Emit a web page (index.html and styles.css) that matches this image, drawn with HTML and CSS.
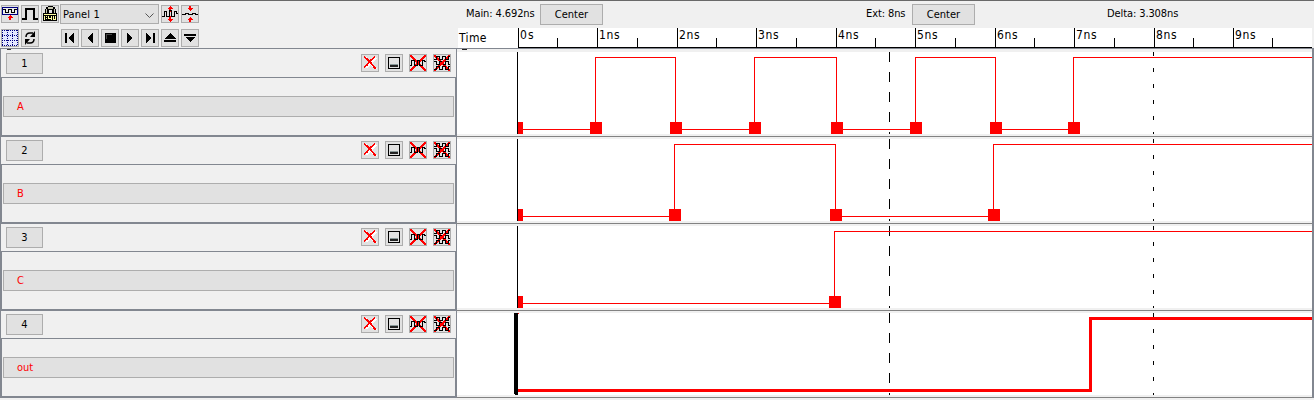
FILE: index.html
```
<!DOCTYPE html>
<html lang="en">
<head>
<meta charset="utf-8">
<title>Timing diagram</title>
<link rel="stylesheet" href="styles.css">
</head>
<body>
<svg class="defs" aria-hidden="true">
  <symbol id="close" viewBox="0 0 16 16"><path d="M3 2l11 12M14 3L4 13" stroke="#fff" stroke-width="2"/><path d="M2 2l3 2 4 4 3 4 2 2M13 2l-4 3-4 5-3 2" fill="none" stroke="#f00" stroke-width="1.700"/></symbol>
  <symbol id="mini" viewBox="0 0 16 16"><path d="M2.500 2.500h11v11h-11z" fill="none" stroke="#000"/><path d="M4 9h8v1H4z" fill="#8a9a9a"/><path d="M4 10h8v2H4z" fill="#222"/></symbol>
  <symbol id="wavex" viewBox="0 0 16 16"><path d="M0 0l16 16M16 0L0 16" stroke="#f00" stroke-width="2"/><path d="M6 6h4v4H6z" fill="#f00"/><path d="M0 10.500h1.500v-5h3v5h3v-5h2v5h3v-5h2v1H16" fill="none" stroke="#000"/></symbol>
  <symbol id="wavesx" viewBox="0 0 16 16"><path d="M0 0l16 16M16 0L0 16" stroke="#f00" stroke-width="2"/><path d="M6 6h4v4H6z" fill="#f00"/><path d="M0 4.500h2.500v-3h3v3h3v-3h3v3h3v-3H16M0 6.500h2.500v3h3v-3h2M9 9.500h2.500v-3h3v3H16M0 14.500h2.500v-3h3v3h3v-3h3v3h3v-3H16" fill="none" stroke="#000"/></symbol>
</svg>
<main class="app">
  <header class="top">
    <div class="tools">
      <div class="line">
        <button class="ico"><svg viewBox="0 0 16 16"><path d="M0 1h16v8H0z" fill="#000080"/><path d="M1 2h14v6H1z" fill="#ececec"/><path d="M1 3.500h2.500v3h3v-3h3v3h3v-3H15" fill="none" stroke="#000"/><path d="M8 9l3 3H9v2H7v-2H5z" fill="#f00"/></svg></button>
        <button class="ico"><svg viewBox="0 0 16 16"><path d="M0 13h4V3h8v10h4" fill="none" stroke="#000" stroke-width="2"/></svg></button>
        <button class="ico lock"><svg viewBox="0 0 16 16"><path d="M3 7V3h1V1h2V0h5v1h2v2h1v4h-4V4H7v3z" fill="#000"/><path d="M4 7V3h2V1h5v2h2v4h-1V3H5v4z" fill="#c8c8b0"/><path d="M1 7h14v8H1z" fill="#000"/><path d="M2 8h12v1H2zM2 10h1v4H2zM4 10h1v1H4zM4 12h1v1H4zM6 10h1v2h2v-2h1v4H9v-1H6zM11 10h1v3h1v-3h1v4h-3z" fill="#ffffa0"/></svg></button>
        <div class="select">Panel 1<svg viewBox="0 0 9 5"><path d="M.5.5l4 4 4-4" fill="none" stroke="#555"/></svg></div>
        <button class="ico"><svg viewBox="0 0 16 16"><path d="M8 0l3 3H9v3H7V3H5zM8 16l3-3H9v-3H7v3H5z" fill="#f00"/><path d="M0 10.500h2.500v-5h2v5h3v-6h2v6h3v-5h2v2H16" fill="none" stroke="#000"/></svg></button>
        <button class="ico"><svg viewBox="0 0 16 16"><path d="M8 5l3-3H9V0H7v2H5zM8 11l3 3H9v2H7v-2H5z" fill="#f00"/><path d="M0 8.500h3v-1h3v1h4v-1h3v1h3" fill="none" stroke="#000"/></svg></button>
      </div>
      <div class="line">
        <button class="ico"><svg viewBox="0 0 16 16"><path d="M0 0h16v16H0z" fill="#e4e8ff"/><path d="M.5 0v16M5.500 0v16M10.500 0v16M15.500 0v16M0 .5h16M0 5.500h16M0 10.500h16M0 15.500h16" stroke="#000080" stroke-dasharray="1 1"/></svg></button>
        <button class="ico gap"><svg class="smooth" viewBox="0 0 16 16"><path d="M4 7c0-3 2-4 4-4h3M12 9c0 3-2 4-4 4H5" fill="none" stroke="#000" stroke-width="1.500"/><path d="M13 1v6H8zM3 15V9h5z"/></svg></button>
        <button class="ico"><svg viewBox="0 0 16 16"><path d="M3 3h2v10H3zM12 3v10L6 8z"/></svg></button>
        <button class="ico"><svg viewBox="0 0 16 16"><path d="M11 3v10L5 8z"/></svg></button>
        <button class="ico"><svg viewBox="0 0 16 16"><path d="M3 3h11v10H3z"/><path d="M4 4h6v1H5v4H4z" fill="#444"/></svg></button>
        <button class="ico"><svg viewBox="0 0 16 16"><path d="M5 3v10l6-5z"/></svg></button>
        <button class="ico"><svg viewBox="0 0 16 16"><path d="M11 3h2v10h-2zM4 3v10l6-5z"/></svg></button>
        <button class="ico"><svg viewBox="0 0 16 16"><path d="M8 3l6 6H2zM2 10h12v2H2z"/></svg></button>
        <button class="ico"><svg viewBox="0 0 16 16"><path d="M2 4h12v2H2zM3 7h11l-6 5z"/></svg></button>
      </div>
    </div>
    <div class="info">
      <div class="cursors">
        <span class="main">Main: 4.692ns</span><button class="center">Center</button>
        <span class="ext">Ext: 8ns</span><button class="center">Center</button>
        <span class="delta">Delta: 3.308ns</span>
      </div>
      <svg class="ruler" viewBox="458 28 854 20">
        <path d="M518 47.500H1312M518.500 28v20M597.500 28v20M677.500 28v20M756.500 28v20M836.500 28v20M915.500 28v20M995.500 28v20M1074.500 28v20M1154.500 28v20M1233.500 28v20M557.500 38v10M637.500 38v10M716.500 38v10M796.500 38v10M875.500 38v10M955.500 38v10M1034.500 38v10M1114.500 38v10M1193.500 38v10M1272.500 38v10" stroke="#000"/>
        <g class="labels"><text x="459" y="42" textLength="27.500">Time</text><text x="520" y="39" textLength="13.500">0s</text><text x="599" y="39" textLength="20.500">1ns</text><text x="679" y="39" textLength="20.500">2ns</text><text x="758" y="39" textLength="20.500">3ns</text><text x="838" y="39" textLength="20.500">4ns</text><text x="917" y="39" textLength="20.500">5ns</text><text x="997" y="39" textLength="20.500">6ns</text><text x="1076" y="39" textLength="20.500">7ns</text><text x="1156" y="39" textLength="20.500">8ns</text><text x="1235" y="39" textLength="20.500">9ns</text></g>
      </svg>
    </div>
  </header>
  <section class="rows">
    <div class="row">
      <div class="side"><div class="head"><button class="num">1</button><div class="acts"><button class="ico"><svg><use href="#close"/></svg></button><button class="ico"><svg><use href="#mini"/></svg></button><button class="ico"><svg><use href="#wavex"/></svg></button><button class="ico"><svg><use href="#wavesx"/></svg></button></div></div><div class="body"><button class="signal">A</button></div></div>
      <div class="plot"><svg viewBox="457 52 855 82"><path class="m" d="M889.500 52v82"/><path class="e" d="M1153.500 52v82"/><path class="w" d="M518 129.500H595.500V57.500H675.500V129.500H754.500V57.500H836.500V129.500H915.500V57.500H995.500V129.500H1073.500V57.500H1312"/><path class="h" d="M518 122h5v12h-5zM590 122h12v12h-12zM670 122h12v12h-12zM749 122h12v12h-12zM831 122h12v12h-12zM910 122h12v12h-12zM990 122h12v12h-12zM1068 122h12v12h-12z"/><path class="z" d="M517.500 52v82"/></svg></div>
    </div>
    <div class="row">
      <div class="side"><div class="head"><button class="num">2</button><div class="acts"><button class="ico"><svg><use href="#close"/></svg></button><button class="ico"><svg><use href="#mini"/></svg></button><button class="ico"><svg><use href="#wavex"/></svg></button><button class="ico"><svg><use href="#wavesx"/></svg></button></div></div><div class="body"><button class="signal">B</button></div></div>
      <div class="plot"><svg viewBox="457 139 855 82"><path class="m" d="M889.500 139v82"/><path class="e" d="M1153.500 139v82"/><path class="w" d="M518 216.500H674.500V144.500H835.500V216.500H993.500V144.500H1312"/><path class="h" d="M518 209h5v12h-5zM669 209h12v12h-12zM830 209h12v12h-12zM988 209h12v12h-12z"/><path class="z" d="M517.500 139v82"/></svg></div>
    </div>
    <div class="row">
      <div class="side"><div class="head"><button class="num">3</button><div class="acts"><button class="ico"><svg><use href="#close"/></svg></button><button class="ico"><svg><use href="#mini"/></svg></button><button class="ico"><svg><use href="#wavex"/></svg></button><button class="ico"><svg><use href="#wavesx"/></svg></button></div></div><div class="body"><button class="signal">C</button></div></div>
      <div class="plot"><svg viewBox="457 226 855 82"><path class="m" d="M889.500 226v82"/><path class="e" d="M1153.500 226v82"/><path class="w" d="M518 303.500H834.500V231.500H1312"/><path class="h" d="M518 296h5v12h-5zM829 296h12v12h-12z"/><path class="z" d="M517.500 226v82"/></svg></div>
    </div>
    <div class="row">
      <div class="side"><div class="head"><button class="num">4</button><div class="acts"><button class="ico"><svg><use href="#close"/></svg></button><button class="ico"><svg><use href="#mini"/></svg></button><button class="ico"><svg><use href="#wavex"/></svg></button><button class="ico"><svg><use href="#wavesx"/></svg></button></div></div><div class="body"><button class="signal">out</button></div></div>
      <div class="plot"><svg viewBox="457 313 855 82"><path class="m" d="M889.500 313v82"/><path class="e" d="M1153.500 313v82"/><path class="w thick" d="M518 390.500H1090.500V318.500H1312"/><path class="h" d="M518 313h1v1h-1z"/><path d="M514 313h4v82h-3v-1h-1z"/></svg></div>
    </div>
  </section>
</main>
</body>
</html>
```
FILE: styles.css
```
* { box-sizing: border-box; }
body { margin: 0; background: #f0f0f0; overflow: hidden; font: 11px "DejaVu Sans Condensed", "DejaVu Sans", sans-serif; font-stretch: condensed; color: #000; }
.defs { display: none; }
svg { display: block; shape-rendering: crispEdges; }
.smooth { shape-rendering: auto; }
button { margin: 0; padding: 0; font: inherit; color: inherit; border: 1px solid #adadad; background: #e1e1e1; border-radius: 0; }
.app { width: 1314px; height: 400px; border-top: 1px solid #696969; }
.top { height: 47px; display: flex; }
.tools { width: 458px; padding: 3px 0 0 1px; }
.line { display: flex; gap: 2px; height: 20px; align-items: center; }
.line + .line { margin-top: 4px; }
.ico { width: 18px; height: 18px; flex: none; }
.ico svg { width: 16px; height: 16px; }
.lock { margin-right: -1px; }
.gap { margin-right: 20px; }
.select { width: 99px; height: 20px; border: 1px solid #adadad; background: #e1e1e1; display: flex; align-items: center; justify-content: space-between; padding: 0 4px 0 2px; letter-spacing: 0.1px; }
.select svg { width: 9px; height: 5px; shape-rendering: auto; margin-top: 2px; }
.info { width: 854px; }
.cursors { height: 27px; padding: 3px 0 0 8px; display: flex; line-height: 20px; white-space: nowrap; letter-spacing: -0.1px; }
.center { width: 63px; height: 21px; }
.main { width: 74px; }
.ext { width: 46px; margin-left: 263px; }
.delta { margin-left: 132px; }
.ruler { width: 854px; height: 20px; background: #fff; }
.labels { font-size: 12px; }
.rows { border-top: 1px solid #828790; border-right: 2px solid #828790; height: 350px; }
.row { height: 87px; display: flex; }
.row:first-child { background: linear-gradient(#333, #333) 7px 0 / 4px 1px no-repeat, linear-gradient(#222, #222) 462px 0 / 5px 1px no-repeat; }
.side { width: 457px; height: 88px; display: flex; flex-direction: column; }
.head { height: 28px; border-left: 1px solid #828790; border-right: 1px solid #828790; display: flex; justify-content: space-between; padding: 4px 5px 0 5px; }
.num { width: 37px; height: 21px; }
.acts { display: flex; gap: 6px; padding-top: 1px; }
.body { height: 60px; border: solid #828790; border-width: 1px 2px 2px; padding: 18px 0 0 1px; }
.signal { display: block; width: 451px; height: 21px; text-align: left; padding-left: 13px; color: #f00; }
.plot { width: 855px; height: 88px; border-bottom: 1px solid #828282; padding-top: 3px; }
.plot svg { width: 855px; height: 82px; background: #fff; }
.plot path { stroke-width: 1; }
.m, .e, .z { stroke: #000; }
.m { stroke-dasharray: 10 10; }
.e { stroke-dasharray: 4 12; }
.w { fill: none; stroke: #f00; }
.plot .thick { stroke-width: 3; }
.h { fill: #f00; }
```
